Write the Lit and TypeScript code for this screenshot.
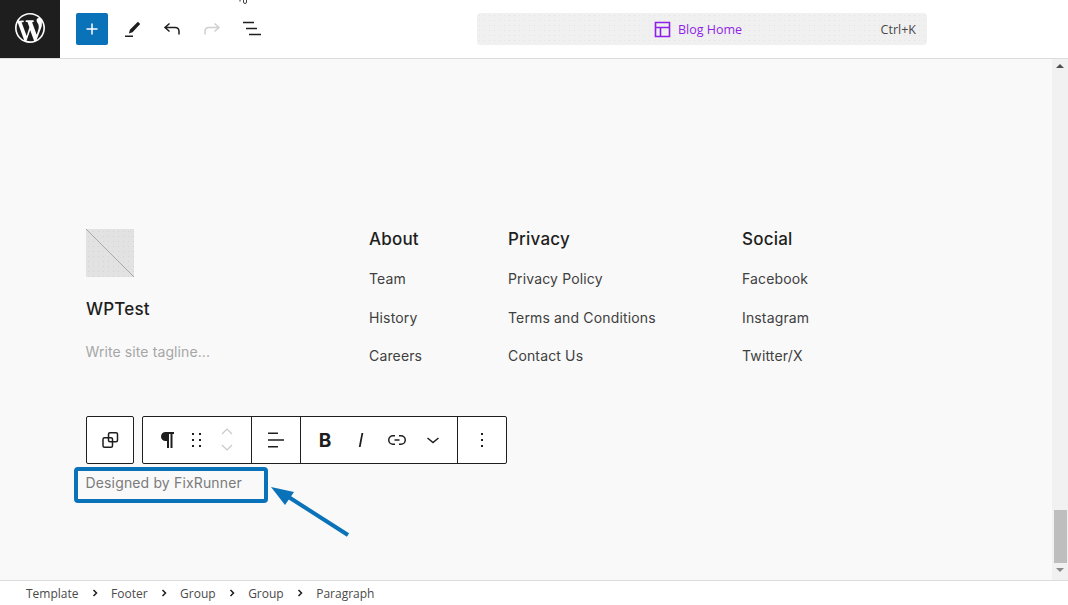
import { LitElement, html, css, svg } from "lit";
import { customElement } from "lit/decorators.js";

const columns = [
  { cls: "c1", title: "About", links: ["Team", "History", "Careers"] },
  { cls: "c2", title: "Privacy", links: ["Privacy Policy", "Terms and Conditions", "Contact Us"] },
  { cls: "c3", title: "Social", links: ["Facebook", "Instagram", "Twitter/X"] },
];
const crumbs = ["Template", "Footer", "Group", "Group", "Paragraph"];

const icon = (w: number, h: number, body: unknown) =>
  html`<svg width=${w} height=${h} viewBox="0 0 ${w} ${h}" aria-hidden="true">${body}</svg>`;

@customElement("app-root")
export class AppRoot extends LitElement {
  static styles = css`
    :host { display: grid; grid-template-rows: 59px 521px 25px; height: 605px; width: 1068px; overflow: hidden; background: #fff; font-family: Inter, "Liberation Sans", sans-serif; color: #1e1e1e; }
    svg { display: block; flex: none; }
    .top { display: flex; align-items: center; border-bottom: 1px solid #dcdcdc; background: #fff; box-sizing: border-box; position: relative; }
    .wp { width: 60px; height: 58px; box-sizing: border-box; padding-bottom: 2px; background: #1e1e1e; display: flex; align-items: center; justify-content: center; flex: none; }
    .tools { display: flex; align-items: center; margin-left: 16px; gap: 8px; }
    .add { width: 32px; height: 32px; border-radius: 2px; background: #0a72b8; display: flex; align-items: center; justify-content: center; }
    .tool { width: 32px; height: 32px; display: flex; align-items: center; justify-content: center; }
    .cursor { position: absolute; left: 238px; top: 0; }
    .cmd { margin-left: 209px; width: 450px; height: 32px; box-sizing: border-box; border-radius: 4px; background-color: #f0f0f0; background-image: radial-gradient(#e4e4e4 0.6px, transparent 0.8px); background-size: 5px 5px; display: grid; grid-template-columns: 1fr auto 1fr; align-items: center; font-family: "Open Sans", "Noto Sans", sans-serif; font-size: 12.5px; }
    .doc { grid-column: 2; display: flex; align-items: center; gap: 7px; color: #8f1fe6; margin-right: 8px; }
    .kbd { grid-column: 3; justify-self: end; margin-right: 11px; color: #4a4a4a; }
    .canvas { display: flex; background: #f9f9f9; min-height: 0; }
    .content { flex: 1; box-sizing: border-box; padding: 170px 0 0 86px; position: relative; }
    .footer { display: flex; align-items: flex-start; }
    .brand { width: 283px; flex: none; }
    .logo { width: 48px; height: 48px; background-color: #e2e2e2; background-image: radial-gradient(#d4d4d4 0.6px, transparent 0.8px); background-size: 5px 5px; }
    .name { margin-top: 21px; font-size: 17px; font-weight: 500; letter-spacing: .2px; line-height: 22px; color: #1e1e1e; }
    .tag { margin-top: 21px; font-size: 14px; line-height: 22px; color: #a6a6a6; letter-spacing: .1px; margin-left: -.5px; }
    .col h3 { margin: -1px 0 0; font-size: 17px; line-height: 22px; font-weight: 500; letter-spacing: .2px; color: #1e1e1e; }
    .col ul { list-style: none; margin: 0; padding: 0; }
    .col li { font-size: 14px; line-height: 22px; margin-top: 16.5px; color: #404040; letter-spacing: .15px; }
    .col li:first-child { margin-top: 18px; }
    .c1 { width: 139px; } .c2 { width: 234px; }
    .bar { display: flex; gap: 8px; margin-top: 49px; }
    .group { display: flex; height: 48px; box-sizing: border-box; border: 1px solid #1e1e1e; border-radius: 2px; background: #fff; }
    .seg { display: flex; align-items: center; border-left: 1px solid #1e1e1e; box-sizing: border-box; }
    .seg:first-child { border-left: 0; }
    .b { display: flex; align-items: center; justify-content: center; height: 46px; flex: none; }
    .s1 { width: 108px; } .s2 { width: 49px; } .s3 { width: 157px; } .s4 { width: 49px; }
    .w46 { width: 46px; } .w16 { width: 16px; } .w44 { width: 44px; } .w48 { width: 48px; } .w24 { width: 24px; }
    .bold { font-size: 19px; font-weight: 700; font-family: Inter, "Liberation Sans", sans-serif; }
    .para { position: relative; margin-top: 8px; font-size: 14px; line-height: 22px; color: #7b7b7b; letter-spacing: .15px; margin-left: -.5px; }
    .hl { position: absolute; left: -11.500px; top: -5px; width: 194px; height: 36px; box-sizing: border-box; border: 4px solid #0a72b8; border-radius: 4px; }
    .arrow { position: absolute; left: 262px; top: 420px; }
    .scroll { width: 16px; flex: none; background: #f1f1f1; display: flex; flex-direction: column; align-items: center; box-sizing: border-box; position: relative; }
    .up { margin-top: 5px; width: 0; height: 0; border: 4px solid transparent; border-top: 0; border-bottom: 4px solid #505050; }
    .thumb { position: absolute; top: 451px; left: 2px; width: 13px; height: 53px; background: #bebebe; }
    .down { position: absolute; top: 509px; left: 4px; width: 0; height: 0; border: 4px solid transparent; border-bottom: 0; border-top: 4px solid #8a8a8a; }
    .crumbs { border-top: 1px solid #dcdcdc; background: #fff; display: flex; align-items: center; padding-left: 26px; font-family: "Open Sans", "Noto Sans", sans-serif; font-size: 12px; color: #4a4a4a; box-sizing: border-box; }
    .sep { width: 32.500px; display: flex; justify-content: center; }
  `;

  render() {
    return html`
      <header class="top">
        <div class="wp">
          <svg width="30" height="30" viewBox="0 0 20 20"><path fill="#fff" d="M20 10c0-5.510-4.490-10-10-10C4.480 0 0 4.490 0 10c0 5.520 4.480 10 10 10 5.510 0 10-4.480 10-10zM7.780 15.370L4.370 6.220c.55-.02 1.170-.08 1.170-.08.5-.06.44-1.130-.06-1.110 0 0-1.450.11-2.370.11-.18 0-.37 0-.58-.01C4.120 2.690 6.890 1.050 10 1.050c2.320 0 4.430.87 6.030 2.340-.68-.11-1.650.39-1.650 1.580 0 .74.45 1.360.9 2.100.35.61.55 1.360.55 2.460 0 1.490-1.400 5-1.400 5l-3.030-8.370c.54-.02.82-.17.82-.17.5-.05.44-1.250-.06-1.220 0 0-1.440.12-2.380.12-.87 0-2.330-.12-2.330-.12-.5-.03-.56 1.200-.06 1.220l.92.080 1.260 3.410zM17.410 10c.24-.64.74-1.870.43-4.250.7 1.290 1.050 2.710 1.050 4.250 0 3.290-1.730 6.240-4.400 7.780.97-2.590 1.940-5.200 2.920-7.780zM6.100 18.090C3.120 16.650 1.110 13.530 1.110 10c0-1.300.23-2.480.72-3.590C3.250 10.300 4.670 14.200 6.100 18.090zm4.030-6.630l2.580 6.980c-.86.29-1.760.45-2.710.45-.79 0-1.570-.11-2.290-.33.810-2.370 1.620-4.730 2.420-7.100z"/></svg>
        </div>
        <div class="tools">
          <div class="add">${icon(24, 24, svg`<path d="M12 6.500v11M6.500 12h11" stroke="#fff" stroke-width="1.500" fill="none"/>`)}</div>
          <div class="tool">${icon(24, 24, svg`<path fill="#1e1e1e" d="M17.900 4.800l2.300 2.200-7.700 8.300-3.600 1.300 1-3.800zM5 18.400h8v1.500H5z"/>`)}</div>
          <div class="tool">${icon(24, 24, svg`<path fill="none" stroke="#1e1e1e" stroke-width="1.500" d="M9.500 6.500L5 10.500l4.500 4M5 10.500h10c2.500 0 4 1.500 4 4v3"/>`)}</div>
          <div class="tool">${icon(24, 24, svg`<path fill="none" stroke="#cfcfcf" stroke-width="1.500" d="M14.500 6.500l4.500 4-4.500 4M19 10.500H9c-2.500 0-4 1.500-4 4v3"/>`)}</div>
          <div class="tool">${icon(24, 24, svg`<path fill="none" stroke="#1e1e1e" stroke-width="1.500" d="M3 5.500h11M6 11.500h11M9 17.500h12"/>`)}</div>
        </div>
        <svg class="cursor" width="12" height="4" viewBox="0 0 12 4"><path d="M2 0v1.500" stroke="#333" stroke-width="1"/><path d="M5.500 0v2a1.500 1.500 0 0 0 3 0V0" stroke="#444" fill="none" stroke-width="1"/></svg>
        <div class="cmd">
          <div class="doc">
            ${icon(17, 17, svg`<path fill="none" stroke="#8f1fe6" stroke-width="1.600" d="M1.500 1.500h14v14h-14zM1.500 6.500h14M6.500 6.500v9"/>`)}
            <span>Blog Home</span>
          </div>
          <span class="kbd">Ctrl+K</span>
        </div>
      </header>

      <main class="canvas">
        <div class="content">
          <div class="footer">
            <div class="brand">
              <svg class="logo" viewBox="0 0 48 48"><path d="M0 0L48 48" stroke="#9a9a9a" stroke-width=".8"/></svg>
              <div class="name">WPTest</div>
              <div class="tag">Write site tagline...</div>
            </div>
            ${columns.map((c) => html`
              <div class="col ${c.cls}">
                <h3>${c.title}</h3>
                <ul>${c.links.map((l) => html`<li>${l}</li>`)}</ul>
              </div>`)}
          </div>
          <div class="bar">
            <div class="group"><div class="b w46">
              ${icon(24, 24, svg`<path fill="none" stroke="#1e1e1e" stroke-width="1.500" d="M12 4.750h6c.9 0 1.500.6 1.500 1.500v6c0 .9-.6 1.500-1.500 1.500h-6c-.9 0-1.500-.6-1.500-1.500v-6c0-.9.6-1.500 1.500-1.500zM6.500 9.750h6.500c.9 0 1.500.6 1.500 1.500v6.500c0 .9-.6 1.500-1.500 1.500H6.500c-.9 0-1.500-.6-1.500-1.500v-6.500c0-.9.6-1.500 1.500-1.500z"/>`)}
            </div></div>
            <div class="group">
              <div class="seg s1">
                <div class="b w46">${icon(24, 24, svg`<path fill="#1e1e1e" d="M20 4H11.500a4.500 4.500 0 0 0 0 9H13v7h2V6h1.500v14h2V6H20z"/>`)}</div>
                <div class="b w16">${icon(16, 24, svg`<path fill="#1e1e1e" d="M3 5h2v2H3zM10 5h2v2h-2zM3 11h2v2H3zM10 11h2v2h-2zM3 17h2v2H3zM10 17h2v2h-2z"/>`)}</div>
                <div class="b w44">${icon(24, 30, svg`<path fill="none" stroke="#c8c8c8" stroke-width="1.200" d="M7 9l5-5 5 5M7 20l5 5 5-5"/>`)}</div>
              </div>
              <div class="seg s2"><div class="b w48">${icon(24, 24, svg`<path fill="#1e1e1e" d="M4 4.500h10V6H4zM4 11.250h16v1.500H4zM4 18h10v1.500H4z"/>`)}</div></div>
              <div class="seg s3">
                <div class="b w48 bold">B</div>
                <div class="b w24">${icon(24, 24, svg`<path fill="#1e1e1e" d="M12.500 5h1.800L11.600 19H9.800z"/>`)}</div>
                <div class="b w48">${icon(24, 24, svg`<path fill="none" stroke="#1e1e1e" stroke-width="1.500" d="M10 7.750H8a4.250 4.250 0 0 0 0 8.500h2M14 7.750h2a4.250 4.250 0 0 1 0 8.500h-2M9.500 12h5"/>`)}</div>
                <div class="b w24">${icon(24, 24, svg`<path fill="none" stroke="#1e1e1e" stroke-width="1.500" d="M6.500 10l5.500 4.500 5.500-4.500"/>`)}</div>
              </div>
              <div class="seg s4"><div class="b w48">${icon(24, 24, svg`<path fill="#1e1e1e" d="M11 5h2v2h-2zM11 11h2v2h-2zM11 17h2v2h-2z"/>`)}</div></div>
            </div>
          </div>
          <div class="para">Designed by FixRunner<div class="hl"></div></div>
          <svg class="arrow" width="92" height="60" viewBox="0 0 92 60"><path d="M86 56L25 17" stroke="#0a72b8" stroke-width="4" fill="none"/><path d="M9 8l23 5-9 13z" fill="#0a72b8"/></svg>
        </div>
        <div class="scroll">
          <div class="up"></div>
          <div class="thumb"></div>
          <div class="down"></div>
        </div>
      </main>

      <footer class="crumbs">
        ${crumbs.map((c, i) => html`
          <span>${c}</span>
          ${i < crumbs.length - 1 ? html`<span class="sep"><svg width="8" height="10" viewBox="0 0 8 10"><path d="M2.500 2l3 3-3 3" stroke="#1e1e1e" stroke-width="1.500" fill="none"/></svg></span>` : ""}`)}
      </footer>
    `;
  }
}
